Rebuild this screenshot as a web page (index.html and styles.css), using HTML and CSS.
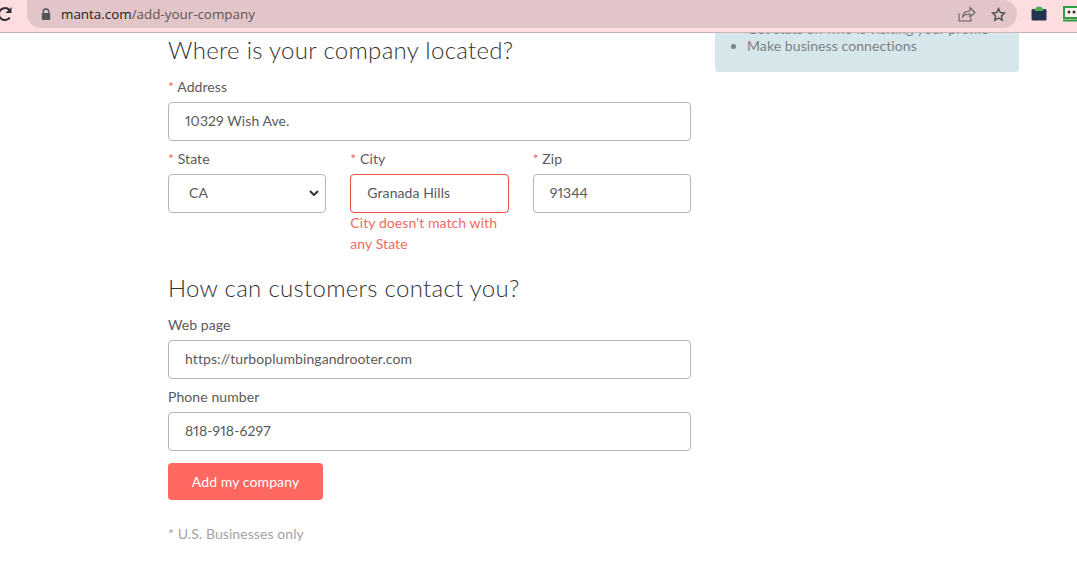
FILE: index.html
```html
<!DOCTYPE html>
<html lang="en">
<head>
<meta charset="utf-8">
<title>Add your company</title>
<link rel="stylesheet" href="styles.css">
</head>
<body>
<header class="toolbar">
  <svg class="reload" width="15" height="16" viewBox="0 0 15 16"><path d="M12.500 4.200A6 6 0 0 0 2 8a6 6 0 0 0 10.800 3.600" fill="none" stroke="#2f2f33" stroke-width="2"/><path d="M8.500 7h6V1z" fill="#2f2f33"/></svg>
  <div class="omnibox">
    <svg class="lock" width="10" height="13" viewBox="0 0 10 13"><path d="M2.200 5.500V3.800a2.800 2.800 0 0 1 5.600 0v1.700" fill="none" stroke="#55565a" stroke-width="1.300"/><rect x="0.800" y="5" width="8.400" height="7" rx="1" fill="#55565a"/></svg>
    <span class="url"><span class="host">manta.com</span>/add-your-company</span>
    <svg class="share" width="18" height="16" viewBox="0 0 18 16"><path d="M1 7.500V15h12v-3M4.500 11C5 7 8 5 12 5V1.500L17 6.500l-5 4.500V8C9 8 6.500 8.800 4.500 11z" fill="none" stroke="#5f5d60" stroke-width="1.100"/></svg>
    <svg class="star" width="15" height="15" viewBox="0 0 15 15"><path d="M7.500 1.600l1.800 3.900 4.200.5-3.100 2.900.8 4.200-3.700-2.100-3.700 2.100.8-4.200L1.500 6l4.200-.5z" fill="none" stroke="#4f4d50" stroke-width="1.400"/></svg>
  </div>
  <svg class="ext-a" width="16" height="15" viewBox="0 0 16 15"><rect x="0.500" y="3" width="15" height="11.500" rx="1.500" fill="#25324f"/><path d="M3.500 5a4.500 4.500 0 0 1 9 0z" fill="#4caf50"/></svg>
  <svg class="ext-b" width="18" height="16" viewBox="0 0 18 16"><rect x="1" y="1" width="17" height="11" fill="#fbeeee" stroke="#2e9e44" stroke-width="2"/><rect x="0" y="13.500" width="18" height="2" fill="#2e9e44"/><circle cx="6" cy="6" r="1.500" fill="#333"/><circle cx="11" cy="6" r="1.500" fill="#333"/></svg>
</header>
<div class="page">
  <main class="form">
    <h2 class="heading first">Where is your company located?</h2>
    <div class="field">
      <label class="label"><span class="req">*</span> Address</label>
      <div class="input">10329 Wish Ave.</div>
    </div>
    <div class="row">
      <div class="cell">
        <label class="label"><span class="req">*</span> State</label>
        <div class="input select"><span>CA</span>
          <svg width="10" height="6" viewBox="0 0 10 6"><path d="M1 1l4 4 4-4" fill="none" stroke="#333" stroke-width="2"/></svg>
        </div>
      </div>
      <div class="cell">
        <label class="label"><span class="req">*</span> City</label>
        <div class="input invalid">Granada Hills</div>
        <p class="error">City doesn't match with any State</p>
      </div>
      <div class="cell">
        <label class="label"><span class="req">*</span> Zip</label>
        <div class="input">91344</div>
      </div>
    </div>
    <h2 class="heading second">How can customers contact you?</h2>
    <div class="field">
      <label class="label">Web page</label>
      <div class="input">https://turboplumbingandrooter.com</div>
    </div>
    <div class="field">
      <label class="label">Phone number</label>
      <div class="input">818-918-6297</div>
    </div>
    <button class="submit" type="button">Add my company</button>
    <p class="note">* U.S. Businesses only</p>
  </main>
  <aside class="panel">
    <ul class="benefits">
      <li>Get stats on who is visiting your profile</li>
      <li>Make business connections</li>
    </ul>
  </aside>
</div>
</body>
</html>
```
FILE: styles.css
```css
* { box-sizing: border-box; }
html, body { margin: 0; height: 100%; }
body {
  width: 1077px;
  height: 565px;
  overflow: hidden;
  background: #fff;
  font-family: "Lato", "Open Sans", sans-serif;
  letter-spacing: 0.08px;
  color: #5a5a5a;
  display: flex;
  flex-direction: column;
}
.toolbar {
  position: relative;
  z-index: 2;
  flex: none;
  height: 33px;
  background: #fedde1;
  border-bottom: 1px solid #c9b3b8;
  display: flex;
  align-items: flex-start;
}
.reload { margin: 6px 0 0 -3px; flex: none; }
.omnibox {
  margin-left: 15px;
  width: 990px;
  height: 28px;
  background: #e2c5c9;
  border-radius: 0 14px 14px 14px;
  display: flex;
  align-items: center;
  padding-left: 14px;
}
.lock { flex: none; }
.url { margin-left: 10px; font: 13.4px "Open Sans", sans-serif; letter-spacing: 0; color: #5d5558; flex: 1; }
.host { color: #242124; }
.share { margin-right: 15px; }
.star { margin-right: 11px; }
.ext-a { position: absolute; left: 1031px; top: 6px; }
.ext-b { position: absolute; left: 1063px; top: 6px; }
.page {
  flex: 1;
  min-height: 0;
  display: flex;
  align-items: flex-start;
  padding-left: 168px;
  gap: 24px;
}
.form { width: 523px; flex: none; }
.heading { margin: 0; font-size: 24px; font-weight: 300; line-height: 30px; letter-spacing: 0.3px; color: #333; }
.heading.first { margin-top: 2px; }
.heading.second { margin-top: 19px; }
.field { margin-top: 8px; }
.heading + .field { margin-top: 12px; }
.label { display: block; font-size: 14px; line-height: 20px; margin-bottom: 5px; }
.req { color: #ee6a60; }
.input {
  height: 39px;
  border: 1px solid #b5b5b5;
  border-radius: 4px;
  padding: 0 16px 2px;
  font-size: 14px;
  font-variant-numeric: proportional-nums;
  display: flex;
  align-items: center;
  background: #fff;
}
.input.select { justify-content: space-between; padding: 0 6px 2px 20px; }
.input.invalid { border-color: #f14b45; }
.row { display: grid; grid-template-columns: repeat(3, 1fr); gap: 24px; margin-top: 8px; }
.error { margin: -1px 0 0; font-size: 14px; line-height: 21px; color: #ef6a62; }
.submit {
  display: block;
  margin-top: 12px;
  width: 155px;
  height: 37px;
  border: 0;
  border-radius: 4px;
  padding-bottom: 2px;
  background: #ff6860;
  color: #fff;
  font: 14px "Lato", sans-serif;
  letter-spacing: 0.1px;
}
.note { margin: 24px 0 0; font-size: 14px; line-height: 20px; color: #a3a3a3; }
.panel {
  width: 304px;
  flex: none;
  margin-top: -21px;
  height: 60px;
  background: #d6e7eb;
  border-radius: 0 0 4px 4px;
  color: #7b8286;
  font-size: 14px;
  line-height: 20px;
  padding-top: 7px;
}
.benefits { margin: 0; padding-left: 32px; }
.benefits li + li { margin-top: -3px; }
```
